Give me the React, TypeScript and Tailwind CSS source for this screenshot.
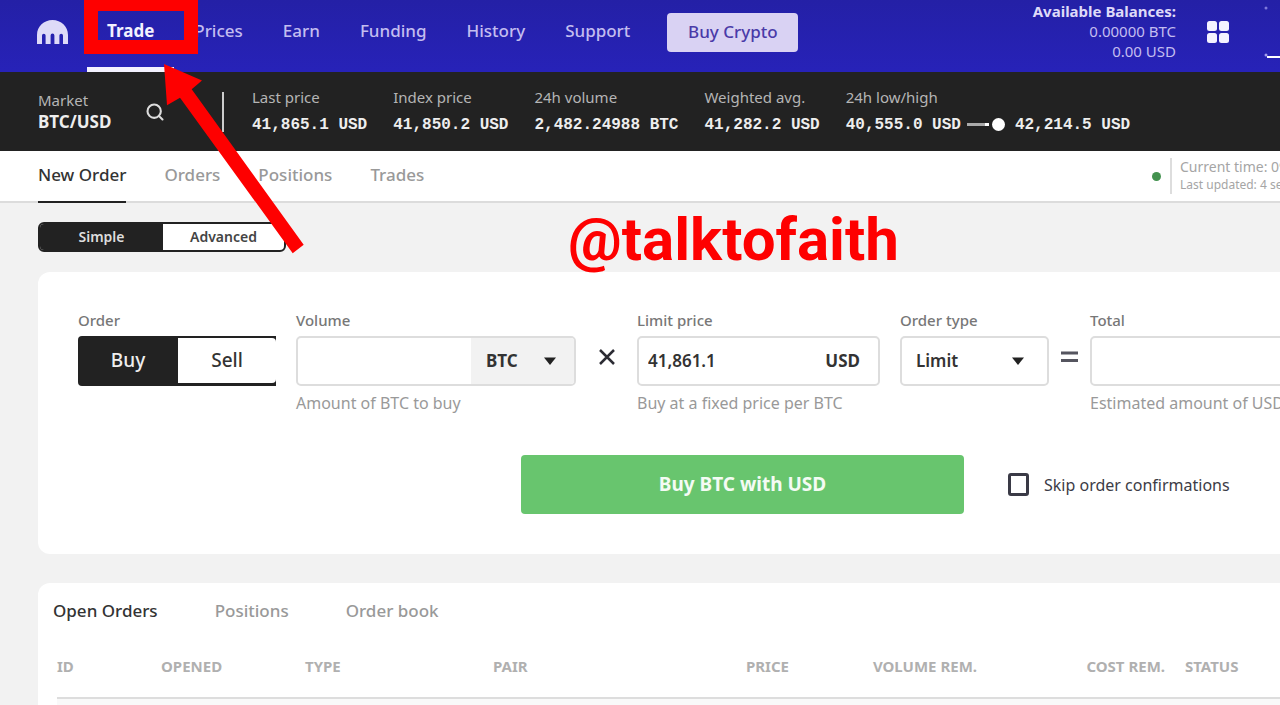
import { useState } from "react";
import { FiSearch } from "react-icons/fi";

const navLinks = ["Prices", "Earn", "Funding", "History", "Support"];

const stats = [
  { label: "Last price", value: "41,865.1 USD" },
  { label: "Index price", value: "41,850.2 USD" },
  { label: "24h volume", value: "2,482.24988 BTC" },
  { label: "Weighted avg.", value: "41,282.2 USD" },
];

const columns = [
  { name: "ID", className: "w-[104px] text-left" },
  { name: "OPENED", className: "w-[144px] text-left" },
  { name: "TYPE", className: "w-[188px] text-left" },
  { name: "PAIR", className: "w-[108px] text-left" },
  { name: "PRICE", className: "w-[188px] text-right" },
  { name: "VOLUME REM.", className: "w-[188px] text-right" },
  { name: "COST REM.", className: "w-[188px] text-right" },
  { name: "STATUS", className: "pl-5 text-left" },
];

const Logo = () => (
  <svg viewBox="0 0 31 24" className="w-[31px] h-6 mb-2" fill="#dedaf8" aria-label="Kraken">
    <path d="M15.500 0C6.900 0 0 6.600 0 14.900V24h5v-8.500a1.800 1.800 0 0 1 3.600 0V24h5v-8.500a1.900 1.900 0 0 1 3.800 0V24h5v-8.500a1.800 1.800 0 0 1 3.600 0V24h5v-9.100C31 6.600 24.100 0 15.500 0z" />
  </svg>
);

const Apps = () => (
  <svg viewBox="0 0 22 22" className="w-[22px] h-[22px]" fill="#f3f2ff">
    <rect width="10" height="10" rx="2.5" />
    <rect x="12" width="10" height="10" rx="2.5" />
    <rect y="12" width="10" height="10" rx="2.5" />
    <rect x="12" y="12" width="10" height="10" rx="2.5" />
  </svg>
);

const Caret = () => (
  <svg viewBox="0 0 12 8" className="w-3 h-2 pointer-events-none" fill="#222">
    <path d="M0 .5h12L6 8z" />
  </svg>
);

const Header = () => (
  <header className="flex items-center h-[72px] pl-[37px] bg-gradient-to-b from-[#2420a6] to-[#2722b8] text-[#c3bdf0] whitespace-nowrap">
    <a href="#home">
      <Logo />
    </a>
    <nav className="flex h-full ml-[19px] text-[17px] leading-6 font-medium">
      <a href="#trade" className="px-5 pt-[19px] border-b-[5px] border-[#f3f2ff] font-bold text-[#f3f2ff]">
        Trade
      </a>
      {navLinks.map((link) => (
        <a key={link} href="#nav" className="px-5 pt-[19px]">
          {link}
        </a>
      ))}
    </nav>
    <button className="ml-[17px] mb-2 w-[131px] h-[39px] rounded bg-[#d9d2f3] text-[17px] leading-6 font-medium text-[#4a3aa8]">
      Buy Crypto
    </button>
    <div className="ml-auto mb-[10px] text-right text-[15px] leading-5">
      <p className="font-bold text-[#dedaf8]">Available Balances:</p>
      <p>0.00000 BTC</p>
      <p>0.00 USD</p>
    </div>
    <button className="ml-[31px] mb-2" aria-label="Apps">
      <Apps />
    </button>
    <svg viewBox="0 0 16 52" className="ml-[35px] mb-2 w-4 h-[52px]">
      <circle cx="2" cy="2" r="1.5" fill="#7f79dc" />
      <circle cx="2" cy="49" r="1.5" fill="#a39eea" />
      <path d="M3 51h13" stroke="#fff" strokeWidth="2" />
    </svg>
  </header>
);

const MarketBar = () => (
  <section className="flex h-[79px] pl-[38px] bg-[#222] text-white whitespace-nowrap">
    <div className="w-[107px] pt-[18px]">
      <p className="text-[15px] leading-5 text-[#b5b5b5]">Market</p>
      <p className="text-[17px] leading-6 font-bold text-[#eee]">BTC/USD</p>
    </div>
    <button className="w-[77px]" aria-label="Search market">
      <FiSearch className="w-5 h-5 text-[#ddd]" strokeWidth={2.5} />
    </button>
    <div className="w-[2px] h-10 mt-5 bg-[#ccc]" />
    <div className="flex gap-[26px] pl-7 pt-[15px]">
      {stats.map((s) => (
        <div key={s.label}>
          <p className="text-[15px] leading-5 text-[#b5b5b5]">{s.label}</p>
          <p className="mt-[6px] font-['Liberation_Mono',monospace] text-base leading-6 font-bold text-[#eee]">{s.value}</p>
        </div>
      ))}
      <div>
        <p className="text-[15px] leading-5 text-[#b5b5b5]">24h low/high</p>
        <div className="flex items-center mt-[6px] font-['Liberation_Mono',monospace] text-base leading-6 font-bold text-[#eee]">
          <span>40,555.0 USD</span>
          <svg viewBox="0 0 42 14" className="w-[42px] h-[14px] mx-[6px]">
            <path d="M0 6.500h19" stroke="#aaa" strokeWidth="3" />
            <path d="M18 6.500h4" stroke="#fff" strokeWidth="3" />
            <circle cx="31.5" cy="6.5" r="6.5" fill="#fff" />
          </svg>
          <span>42,214.5 USD</span>
        </div>
      </div>
    </div>
  </section>
);

const Tabs = () => (
  <section className="flex h-[52px] pl-[38px] bg-white border-b-2 border-[#dcdcdc] text-[17px] font-medium text-[#999] whitespace-nowrap">
    <div className="flex gap-[38px]">
      <button className="-mb-[2px] pb-[2px] border-b-2 border-[#222] text-[#333]">New Order</button>
      <button className="pb-[2px]">Orders</button>
      <button className="pb-[2px]">Positions</button>
      <button className="pb-[2px]">Trades</button>
    </div>
    <div className="flex items-center ml-auto w-32 shrink-0 font-normal">
      <span className="w-[9px] h-[9px] shrink-0 rounded-full bg-[#43924f]" />
      <div className="ml-[9px] pl-2 border-l-2 border-[#ddd] text-[#a5a5a5]">
        <p className="text-sm leading-[18px]">Current time: 09:41</p>
        <p className="text-xs leading-[18px]">Last updated: 4 seconds ago</p>
      </div>
    </div>
  </section>
);

const OrderForm = () => {
  const [side, setSide] = useState("buy");

  return (
    <form
      className="h-[282px] ml-[38px] pl-10 pt-[38px] rounded-l-xl bg-white text-[15px] text-[#999] whitespace-nowrap"
      onSubmit={(e) => e.preventDefault()}
    >
      <div className="flex">
        <div className="w-[198px] shrink-0">
          <p className="mb-[6px] leading-5 font-medium text-[#777]">Order</p>
          <div className="flex h-[50px] rounded-l bg-[#222] pt-[2px] pb-[3px] text-[19px] font-medium">
            <button type="button" className="w-[100px] text-[#eee]" onClick={() => setSide("buy")}>
              Buy
            </button>
            <button type="button" className="grow rounded-r bg-white text-[#333]" onClick={() => setSide("sell")}>
              Sell
            </button>
          </div>
        </div>

        <div className="w-[280px] ml-5 shrink-0">
          <label htmlFor="volume" className="block mb-[6px] leading-5 font-medium text-[#777]">
            Volume
          </label>
          <div className="flex h-[50px] border-2 border-[#ddd] rounded-[5px] overflow-hidden">
            <input id="volume" className="grow min-w-0 px-[10px] text-[17px] text-[#333]" />
            <div className="relative w-[103px] shrink-0">
              <select
                aria-label="Volume currency"
                className="appearance-none w-full h-full pl-[15px] bg-[#f2f2f2] text-[17px] font-bold text-[#333]"
              >
                <option>BTC</option>
              </select>
              <div className="absolute inset-y-0 right-[18px] flex items-center pointer-events-none">
                <Caret />
              </div>
            </div>
          </div>
          <p className="mt-[5px] text-base leading-6">Amount of BTC to buy</p>
        </div>

        <div className="w-[61px] pt-[39px] shrink-0">
          <svg viewBox="0 0 16 16" className="w-4 h-4 mx-auto" stroke="#2c2c34" strokeWidth="2.5">
            <path d="M1 1l14 14M15 1L1 15" />
          </svg>
        </div>

        <div className="w-[243px] shrink-0">
          <label htmlFor="price" className="block mb-[6px] leading-5 font-medium text-[#777]">
            Limit price
          </label>
          <div className="flex items-center h-[50px] pr-[18px] border-2 border-[#ddd] rounded-[5px] text-[17px] text-[#333]">
            <input id="price" defaultValue="41,861.1" className="grow min-w-0 pl-[9px] font-semibold" />
            <span className="font-bold">USD</span>
          </div>
          <p className="mt-[5px] text-base leading-6">Buy at a fixed price per BTC</p>
        </div>

        <div className="w-[149px] ml-5 shrink-0">
          <label htmlFor="type" className="block mb-[6px] leading-5 font-medium text-[#777]">
            Order type
          </label>
          <div className="relative h-[50px] border-2 border-[#ddd] rounded-[5px]">
            <select id="type" className="appearance-none w-full h-full pl-[14px] text-[17px] font-semibold text-[#333]">
              <option>Limit</option>
            </select>
            <div className="absolute inset-y-0 right-[23px] flex items-center pointer-events-none">
              <Caret />
            </div>
          </div>
        </div>

        <div className="w-[41px] pt-[41px] shrink-0">
          <svg viewBox="0 0 17 12" className="w-[17px] h-3 mx-auto" stroke="#55555f" strokeWidth="3">
            <path d="M0 2h17M0 9.5h17" />
          </svg>
        </div>

        <div className="w-[281px] shrink-0">
          <label htmlFor="total" className="block mb-[6px] leading-5 font-medium text-[#777]">
            Total
          </label>
          <input
            id="total"
            className="block w-full h-[50px] px-[10px] border-2 border-[#ddd] rounded-[5px] text-[17px] text-[#333]"
          />
          <p className="mt-[5px] text-base leading-6">Estimated amount of USD</p>
        </div>
      </div>

      <div className="flex items-center mt-10 ml-[443px]">
        <button className="w-[443px] h-[59px] rounded bg-[#68c56e] text-[19px] font-bold text-[#f4fbf4]">
          {side === "buy" ? "Buy BTC with USD" : "Sell BTC for USD"}
        </button>
        <label className="flex items-center ml-11 text-base text-[#3c3c46]">
          <input type="checkbox" className="appearance-none w-[21px] h-[23px] mr-[15px] border-[3px] border-[#3a3a46] rounded-[3px]" />
          Skip order confirmations
        </label>
      </div>
    </form>
  );
};

const OpenOrders = () => (
  <section className="grow mt-[29px] ml-[38px] rounded-tl-xl bg-white">
    <div className="flex gap-[57px] pl-[15px] pt-4 text-[17px] leading-6 font-medium text-[#999]">
      <button className="text-[#333]">Open Orders</button>
      <button>Positions</button>
      <button>Order book</button>
    </div>
    <table className="table-fixed w-[calc(100%-19px)] ml-[19px] mt-[22px] whitespace-nowrap">
      <thead>
        <tr className="h-[53px] border-b-2 border-[#ddd] text-[15px] text-[#b0b0b0]">
          {columns.map((c) => (
            <th key={c.name} className={c.className}>
              <div className="pb-[10px]">{c.name}</div>
            </th>
          ))}
        </tr>
      </thead>
      <tbody>
        <tr className="bg-[#f9f9f9]">
          <td colSpan={8} className="h-[7px]" />
        </tr>
      </tbody>
    </table>
  </section>
);

const App = () => {
  return (
    <div className="relative flex flex-col min-h-screen overflow-hidden bg-[#f2f2f2] font-['Noto_Sans',sans-serif]">
      <Header />
      <MarketBar />
      <Tabs />
      <div className="flex w-[248px] h-[30px] ml-[38px] mt-[19px] mb-5 shrink-0 border-2 border-[#222] rounded-[6px] bg-white overflow-hidden text-sm font-semibold">
        <button className="w-[123px] bg-[#222] text-[#ddd]">Simple</button>
        <button className="grow text-[#444]">Advanced</button>
      </div>
      <OrderForm />
      <OpenOrders />

      {/* annotations on top of the page */}
      <div className="absolute left-[84px] -top-[3px] w-[114px] h-[57px] border-[14px] border-[#fe0000]" />
      <svg viewBox="0 0 140 190" className="absolute left-[164px] top-16 w-[140px] h-[190px]" fill="#fe0000">
        <path d="M0 0L38 16.500L27.700 25.300L139.700 180.700L128.700 189.300L16 33.700L3 41.300z" />
      </svg>
      <p className="absolute left-[568px] top-[205px] font-['Roboto',sans-serif] text-[60px] leading-[70px] font-bold text-[#fe0000]">
        @talktofaith
      </p>
    </div>
  );
};

export default App;
